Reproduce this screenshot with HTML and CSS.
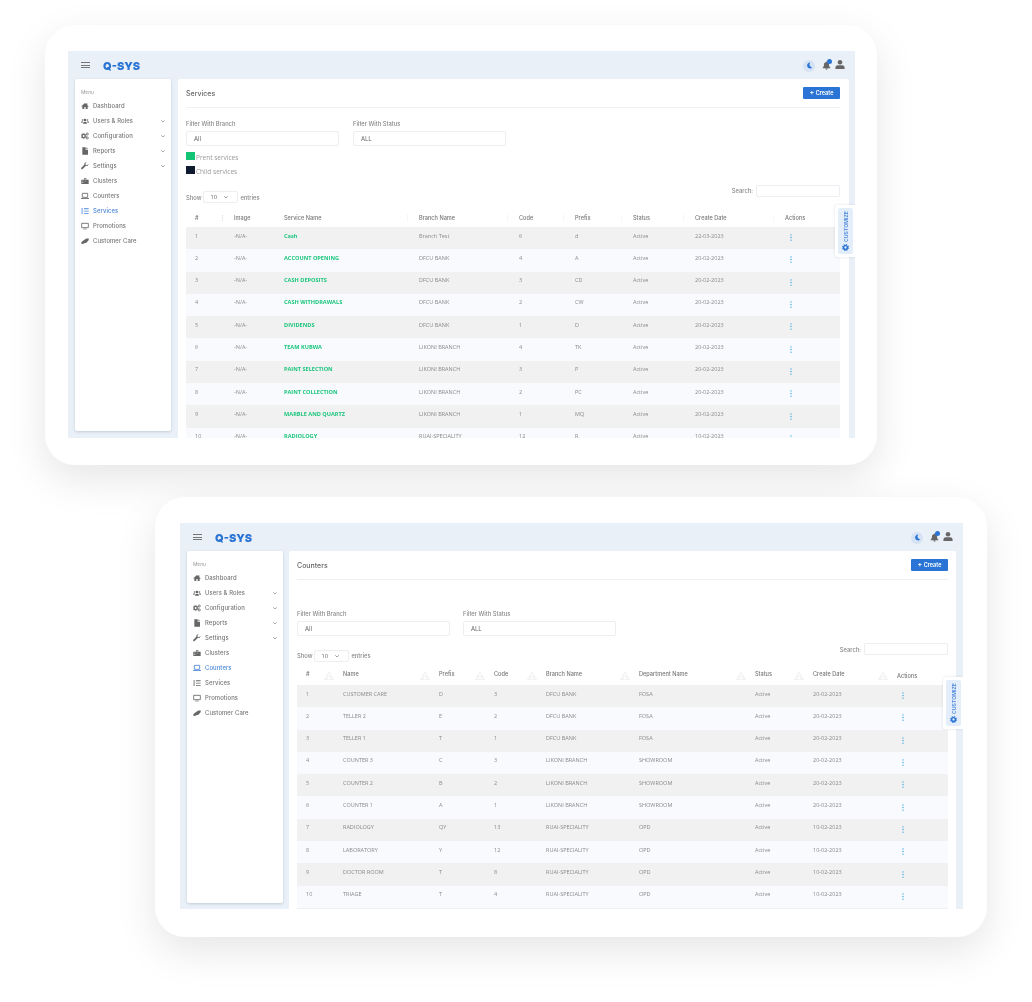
FILE: index.html
```html
<!DOCTYPE html>
<html>

<head>
    <title>Q-SYS Screens</title>
    <link rel="stylesheet" href="styles.css">
</head>

<body>
    <svg class="icon-defs" xmlns="http://www.w3.org/2000/svg">
        <symbol id="i-home" viewBox="0 0 24 24"><path d="M12 3 1 13l1.500 1.500L4 13v8h6v-6h4v6h6v-8l1.500 1.500L23 13l-4-3.600V4h-3v2.700z" /></symbol>
        <symbol id="i-users" viewBox="0 0 24 24"><circle cx="12" cy="9" r="4" /><circle cx="4.500" cy="9" r="2.500" /><circle cx="19.500" cy="9" r="2.500" /><path d="M6 20c0-4 2-6 6-6s6 2 6 6zM0 17c0-3 1.500-4.500 4.500-4.500L6 13c-1 1-1.500 2.500-1.500 4zM24 17c0-3-1.500-4.500-4.500-4.500L18 13c1 1 1.500 2.500 1.500 4z" /></symbol>
        <symbol id="i-cogs" viewBox="0 0 24 24"><circle cx="8" cy="12" r="5" fill="none" stroke="currentColor" stroke-width="4" /><circle cx="8" cy="12" r="8" fill="none" stroke="currentColor" stroke-width="2.500" stroke-dasharray="3 3" /><circle cx="19" cy="6" r="3" fill="none" stroke="currentColor" stroke-width="2.500" /><circle cx="19" cy="18" r="3" fill="none" stroke="currentColor" stroke-width="2.500" /></symbol>
        <symbol id="i-file" viewBox="0 0 24 24"><path d="M4 1h10v7h7v15H4zM16 1l5 5h-5z" /></symbol>
        <symbol id="i-wrench" viewBox="0 0 24 24"><path d="M22 6l-4 4-4-1-1-4 4-4c-4-1-8 2-7 7L1 17c-1 1-1 2.500 0 4s3 1 4 0l9-9c5 1 9-2 8-6z" /></symbol>
        <symbol id="i-clusters" viewBox="0 0 24 24"><path d="M1 8h8V4h7v4h7v13H1z" /><path d="M4 11h3v2H4zM4 15h3v2H4zM11 7h3v2h-3zM11 11h3v2h-3z" fill="#fff" /></symbol>
        <symbol id="i-laptop" viewBox="0 0 24 24"><path d="M4 4h16v12H4z" fill="none" stroke="currentColor" stroke-width="2.500" /><path d="M0 18h24v2.500H0z" /></symbol>
        <symbol id="i-list" viewBox="0 0 24 24"><path d="M9 4h14v2.500H9zM9 11h14v2.500H9zM9 18h14v2.500H9zM2 3h2.500v18H2z" /></symbol>
        <symbol id="i-monitor" viewBox="0 0 24 24"><path d="M2 4h20v13H2z" fill="none" stroke="currentColor" stroke-width="2.500" /><path d="M7 20h10v2H7z" /></symbol>
        <symbol id="i-hands" viewBox="0 0 24 24"><path d="M1 16 10 8l5-3 8-1v6l-7 7-7 2-3 2-5-1z" /></symbol>
        <symbol id="i-moon" viewBox="0 0 24 24"><path d="M15 2a10 10 0 1 0 6 17A10 10 0 0 1 15 2z" /></symbol>
        <symbol id="i-bell" viewBox="0 0 24 24"><path d="M12 1a2 2 0 0 1 2 2c4 1 5 4 5 8 0 3 1 4 3 6v2H2v-2c2-2 3-3 3-6 0-4 1-7 5-8a2 2 0 0 1 2-2zM9 20h6a3 3 0 0 1-6 0z" /></symbol>
        <symbol id="i-user" viewBox="0 0 24 24"><circle cx="12" cy="6.500" r="5.500" /><path d="M1 23v-3c0-4 3-6 6-6h10c3 0 6 2 6 6v3z" /></symbol>
        <symbol id="i-gear" viewBox="0 0 24 24"><circle cx="12" cy="12" r="6.500" fill="none" stroke="currentColor" stroke-width="5" /><circle cx="12" cy="12" r="10" fill="none" stroke="currentColor" stroke-width="3.500" stroke-dasharray="4.500 3.350" /></symbol>
        <symbol id="i-sort" viewBox="0 0 24 24"><path d="M12 3 6 14h12zM5 15 0 23h10zM19 15l-5 8h10z" fill="none" stroke="currentColor" stroke-width="1.800" /></symbol>
        <symbol id="i-down" viewBox="0 0 24 24"><path d="M5 9l7 7 7-7" fill="none" stroke="currentColor" stroke-width="2.500" /></symbol>
        <symbol id="i-dots" viewBox="0 0 4 16"><circle cx="2" cy="2" r="1.500" /><circle cx="2" cy="8" r="1.500" /><circle cx="2" cy="14" r="1.500" /></symbol>
    </svg>

    <div class="card card--services">
        <div class="frame frame--services">
            <div class="topbar">
                <div class="burger"><span></span><span></span><span></span></div>
                <div class="logo">Q-SYS</div>
                <div class="topbar-icons">
                    <div class="moon"><svg><use href="#i-moon" /></svg></div>
                    <div class="bell"><svg><use href="#i-bell" /></svg><span class="bell-dot"></span></div>
                    <svg class="user"><use href="#i-user" /></svg>
                </div>
            </div>
            <div class="frame-body">
                <div class="sidebar">
                    <div class="menu-label">Menu</div>
                    <div class="menu-item"><svg class="menu-icon"><use href="#i-home" /></svg>Dashboard</div>
                    <div class="menu-item"><svg class="menu-icon"><use href="#i-users" /></svg>Users &amp; Roles<svg class="chevron"><use href="#i-down" /></svg></div>
                    <div class="menu-item"><svg class="menu-icon"><use href="#i-cogs" /></svg>Configuration<svg class="chevron"><use href="#i-down" /></svg></div>
                    <div class="menu-item"><svg class="menu-icon"><use href="#i-file" /></svg>Reports<svg class="chevron"><use href="#i-down" /></svg></div>
                    <div class="menu-item"><svg class="menu-icon"><use href="#i-wrench" /></svg>Settings<svg class="chevron"><use href="#i-down" /></svg></div>
                    <div class="menu-item"><svg class="menu-icon"><use href="#i-clusters" /></svg>Clusters</div>
                    <div class="menu-item"><svg class="menu-icon"><use href="#i-laptop" /></svg>Counters</div>
                    <div class="menu-item menu-item--active"><svg class="menu-icon"><use href="#i-list" /></svg>Services</div>
                    <div class="menu-item"><svg class="menu-icon"><use href="#i-monitor" /></svg>Promotions</div>
                    <div class="menu-item"><svg class="menu-icon"><use href="#i-hands" /></svg>Customer Care</div>
                </div>
                <div class="main">
                    <div class="page-head">
                        <div class="page-title">Services</div>
                        <div class="btn-create"><span class="plus">+</span> Create</div>
                    </div>
                    <div class="filters">
                        <div class="filter">
                            <div class="filter-label">Filter With Branch</div>
                            <div class="filter-input">All</div>
                        </div>
                        <div class="filter">
                            <div class="filter-label">Filter With Status</div>
                            <div class="filter-input">ALL</div>
                        </div>
                    </div>
                    <div class="legend">
                        <div class="legend-row"><span class="swatch swatch--green"></span>Prent services</div>
                        <div class="legend-row"><span class="swatch swatch--dark"></span>Child services</div>
                    </div>
                    <div class="controls">
                        <div class="show">Show <div class="select">10<svg class="select-arrow"><use href="#i-down" /></svg></div> entries</div>
                        <div class="search">Search: <div class="search-input"></div></div>
                    </div>
                    <table class="grid grid--services">
                        <tr>
                            <th>#<svg class="sort-dots sort-dots--on"><use href="#i-dots" /></svg></th>
                            <th>Image</th>
                            <th>Service Name<svg class="sort-dots"><use href="#i-dots" /></svg></th>
                            <th>Branch Name<svg class="sort-dots"><use href="#i-dots" /></svg></th>
                            <th>Code<svg class="sort-dots"><use href="#i-dots" /></svg></th>
                            <th>Prefix<svg class="sort-dots"><use href="#i-dots" /></svg></th>
                            <th>Status<svg class="sort-dots"><use href="#i-dots" /></svg></th>
                            <th>Create Date<svg class="sort-dots"><use href="#i-dots" /></svg></th>
                            <th>Actions</th>
                        </tr>
                        <tr><td>1</td><td>-N/A-</td><td class="name">Cash</td><td>Branch Test</td><td>6</td><td>d</td><td>Active</td><td>22-03-2023</td><td><svg class="dots"><use href="#i-dots" /></svg></td></tr>
                        <tr><td>2</td><td>-N/A-</td><td class="name">ACCOUNT OPENING</td><td>DFCU BANK</td><td>4</td><td>A</td><td>Active</td><td>20-02-2023</td><td><svg class="dots"><use href="#i-dots" /></svg></td></tr>
                        <tr><td>3</td><td>-N/A-</td><td class="name">CASH DEPOSITS</td><td>DFCU BANK</td><td>3</td><td>CD</td><td>Active</td><td>20-02-2023</td><td><svg class="dots"><use href="#i-dots" /></svg></td></tr>
                        <tr><td>4</td><td>-N/A-</td><td class="name">CASH WITHDRAWALS</td><td>DFCU BANK</td><td>2</td><td>CW</td><td>Active</td><td>20-02-2023</td><td><svg class="dots"><use href="#i-dots" /></svg></td></tr>
                        <tr><td>5</td><td>-N/A-</td><td class="name">DIVIDENDS</td><td>DFCU BANK</td><td>1</td><td>D</td><td>Active</td><td>20-02-2023</td><td><svg class="dots"><use href="#i-dots" /></svg></td></tr>
                        <tr><td>6</td><td>-N/A-</td><td class="name">TEAM KUBWA</td><td>LIKONI BRANCH</td><td>4</td><td>TK</td><td>Active</td><td>20-02-2023</td><td><svg class="dots"><use href="#i-dots" /></svg></td></tr>
                        <tr><td>7</td><td>-N/A-</td><td class="name">PAINT SELECTION</td><td>LIKONI BRANCH</td><td>3</td><td>P</td><td>Active</td><td>20-02-2023</td><td><svg class="dots"><use href="#i-dots" /></svg></td></tr>
                        <tr><td>8</td><td>-N/A-</td><td class="name">PAINT COLLECTION</td><td>LIKONI BRANCH</td><td>2</td><td>PC</td><td>Active</td><td>20-02-2023</td><td><svg class="dots"><use href="#i-dots" /></svg></td></tr>
                        <tr><td>9</td><td>-N/A-</td><td class="name">MARBLE AND QUARTZ</td><td>LIKONI BRANCH</td><td>1</td><td>MQ</td><td>Active</td><td>20-02-2023</td><td><svg class="dots"><use href="#i-dots" /></svg></td></tr>
                        <tr><td>10</td><td>-N/A-</td><td class="name">RADIOLOGY</td><td>RUAI-SPECIALITY</td><td>12</td><td>R</td><td>Active</td><td>10-02-2023</td><td><svg class="dots"><use href="#i-dots" /></svg></td></tr>
                    </table>
                </div>
            </div>
            <div class="customize customize--services">
                <div class="customize-inner"><span class="customize-text">CUSTOMIZE</span><svg class="gear"><use href="#i-gear" /></svg></div>
            </div>
        </div>
    </div>

    <div class="card card--counters">
        <div class="frame frame--counters">
            <div class="topbar">
                <div class="burger"><span></span><span></span><span></span></div>
                <div class="logo">Q-SYS</div>
                <div class="topbar-icons">
                    <div class="moon"><svg><use href="#i-moon" /></svg></div>
                    <div class="bell"><svg><use href="#i-bell" /></svg><span class="bell-dot"></span></div>
                    <svg class="user"><use href="#i-user" /></svg>
                </div>
            </div>
            <div class="frame-body">
                <div class="sidebar">
                    <div class="menu-label">Menu</div>
                    <div class="menu-item"><svg class="menu-icon"><use href="#i-home" /></svg>Dashboard</div>
                    <div class="menu-item"><svg class="menu-icon"><use href="#i-users" /></svg>Users &amp; Roles<svg class="chevron"><use href="#i-down" /></svg></div>
                    <div class="menu-item"><svg class="menu-icon"><use href="#i-cogs" /></svg>Configuration<svg class="chevron"><use href="#i-down" /></svg></div>
                    <div class="menu-item"><svg class="menu-icon"><use href="#i-file" /></svg>Reports<svg class="chevron"><use href="#i-down" /></svg></div>
                    <div class="menu-item"><svg class="menu-icon"><use href="#i-wrench" /></svg>Settings<svg class="chevron"><use href="#i-down" /></svg></div>
                    <div class="menu-item"><svg class="menu-icon"><use href="#i-clusters" /></svg>Clusters</div>
                    <div class="menu-item menu-item--active"><svg class="menu-icon"><use href="#i-laptop" /></svg>Counters</div>
                    <div class="menu-item"><svg class="menu-icon"><use href="#i-list" /></svg>Services</div>
                    <div class="menu-item"><svg class="menu-icon"><use href="#i-monitor" /></svg>Promotions</div>
                    <div class="menu-item"><svg class="menu-icon"><use href="#i-hands" /></svg>Customer Care</div>
                </div>
                <div class="main">
                    <div class="page-head">
                        <div class="page-title">Counters</div>
                        <div class="btn-create"><span class="plus">+</span> Create</div>
                    </div>
                    <div class="filters">
                        <div class="filter">
                            <div class="filter-label">Filter With Branch</div>
                            <div class="filter-input">All</div>
                        </div>
                        <div class="filter">
                            <div class="filter-label">Filter With Status</div>
                            <div class="filter-input">ALL</div>
                        </div>
                    </div>
                    <div class="controls">
                        <div class="show">Show <div class="select">10<svg class="select-arrow"><use href="#i-down" /></svg></div> entries</div>
                        <div class="search">Search: <div class="search-input"></div></div>
                    </div>
                    <table class="grid grid--counters">
                        <tr>
                            <th>#<svg class="sort"><use href="#i-sort" /></svg></th>
                            <th>Name<svg class="sort"><use href="#i-sort" /></svg></th>
                            <th>Prefix<svg class="sort"><use href="#i-sort" /></svg></th>
                            <th>Code<svg class="sort"><use href="#i-sort" /></svg></th>
                            <th>Branch Name<svg class="sort"><use href="#i-sort" /></svg></th>
                            <th>Department Name<svg class="sort"><use href="#i-sort" /></svg></th>
                            <th>Status<svg class="sort"><use href="#i-sort" /></svg></th>
                            <th>Create Date<svg class="sort"><use href="#i-sort" /></svg></th>
                            <th>Actions</th>
                        </tr>
                        <tr><td>1</td><td>CUSTOMER CARE</td><td>D</td><td>3</td><td>DFCU BANK</td><td>FOSA</td><td>Active</td><td>20-02-2023</td><td><svg class="dots"><use href="#i-dots" /></svg></td></tr>
                        <tr><td>2</td><td>TELLER 2</td><td>E</td><td>2</td><td>DFCU BANK</td><td>FOSA</td><td>Active</td><td>20-02-2023</td><td><svg class="dots"><use href="#i-dots" /></svg></td></tr>
                        <tr><td>3</td><td>TELLER 1</td><td>T</td><td>1</td><td>DFCU BANK</td><td>FOSA</td><td>Active</td><td>20-02-2023</td><td><svg class="dots"><use href="#i-dots" /></svg></td></tr>
                        <tr><td>4</td><td>COUNTER 3</td><td>C</td><td>3</td><td>LIKONI BRANCH</td><td>SHOWROOM</td><td>Active</td><td>20-02-2023</td><td><svg class="dots"><use href="#i-dots" /></svg></td></tr>
                        <tr><td>5</td><td>COUNTER 2</td><td>B</td><td>2</td><td>LIKONI BRANCH</td><td>SHOWROOM</td><td>Active</td><td>20-02-2023</td><td><svg class="dots"><use href="#i-dots" /></svg></td></tr>
                        <tr><td>6</td><td>COUNTER 1</td><td>A</td><td>1</td><td>LIKONI BRANCH</td><td>SHOWROOM</td><td>Active</td><td>20-02-2023</td><td><svg class="dots"><use href="#i-dots" /></svg></td></tr>
                        <tr><td>7</td><td>RADIOLOGY</td><td>QY</td><td>13</td><td>RUAI-SPECIALITY</td><td>OPD</td><td>Active</td><td>10-02-2023</td><td><svg class="dots"><use href="#i-dots" /></svg></td></tr>
                        <tr><td>8</td><td>LABORATORY</td><td>Y</td><td>12</td><td>RUAI-SPECIALITY</td><td>OPD</td><td>Active</td><td>10-02-2023</td><td><svg class="dots"><use href="#i-dots" /></svg></td></tr>
                        <tr><td>9</td><td>DOCTOR ROOM</td><td>T</td><td>8</td><td>RUAI-SPECIALITY</td><td>OPD</td><td>Active</td><td>10-02-2023</td><td><svg class="dots"><use href="#i-dots" /></svg></td></tr>
                        <tr><td>10</td><td>TRIAGE</td><td>T</td><td>4</td><td>RUAI-SPECIALITY</td><td>OPD</td><td>Active</td><td>10-02-2023</td><td><svg class="dots"><use href="#i-dots" /></svg></td></tr>
                    </table>
                </div>
            </div>
            <div class="customize customize--counters">
                <div class="customize-inner"><span class="customize-text">CUSTOMIZE</span><svg class="gear"><use href="#i-gear" /></svg></div>
            </div>
        </div>
    </div>
</body>

</html>
```

FILE: styles.css
```css
body {
    margin: 0;
    height: 1002px;
    overflow: hidden;
    background-color: white;
    font-family: "Inter", "Liberation Sans", sans-serif;
    color: #6f6f6f;
}

.icon-defs {
    display: none;
}

.card {
    width: 832px;
    height: 440px;
    box-sizing: border-box;
    background-color: white;
    border-radius: 30px;
    box-shadow: 0 14px 40px rgba(0, 0, 0, 0.1);
}

.card--services {
    margin: 25px 0 0 45px;
    padding: 26px 0 0 23px;
}

.card--counters {
    margin: 32px 0 0 155px;
    padding: 26px 0 0 25px;
}

.frame {
    position: relative;
    display: flex;
    flex-direction: column;
    overflow: hidden;
    background-color: #eaf0f7;
    filter: blur(0.3px);
}

.frame--services {
    width: 787px;
    height: 387px;
}

.frame--counters {
    width: 783px;
    height: 386px;
}

/* top bar */
.topbar {
    flex: none;
    display: flex;
    align-items: center;
    height: 28px;
    padding: 0 10px 0 13px;
}

.burger {
    width: 9px;
    margin-right: 13px;
}

.burger span {
    display: block;
    height: 1px;
    margin: 1.500px 0;
    background-color: #777;
}

.logo {
    color: #2a74d5;
    font-size: 11px;
    font-weight: 900;
    margin-top: 2px;
}

.topbar-icons {
    display: flex;
    align-items: center;
    margin-left: auto;
}

.moon {
    display: flex;
    align-items: center;
    justify-content: center;
    width: 12px;
    height: 12px;
    margin-top: 1px;
    margin-right: 7px;
    border-radius: 50%;
    background-color: #d6e3f4;
    color: #2a74d5;
}

.moon svg {
    width: 7px;
    height: 7px;
    fill: currentColor;
}

.bell {
    position: relative;
    width: 9px;
    height: 9px;
    margin-right: 4px;
}

.bell svg {
    display: block;
    width: 9px;
    height: 9px;
    fill: #666;
}

.bell-dot {
    position: absolute;
    top: -2px;
    right: -1px;
    width: 5.500px;
    height: 5.500px;
    border-radius: 50%;
    background-color: #2a74d5;
}

.user {
    width: 10px;
    height: 11px;
    margin-top: -2px;
    fill: #666;
}

/* sidebar */
.frame-body {
    display: flex;
    align-items: flex-start;
    flex: 1;
    min-height: 0;
}

.sidebar {
    flex: none;
    box-sizing: border-box;
    width: 96px;
    height: 352px;
    margin-left: 7px;
    padding: 9px 6px 0;
    background-color: white;
    border-radius: 2px;
    box-shadow: 0 1px 3px rgba(40, 60, 90, 0.2);
}

.menu-label {
    height: 8px;
    line-height: 8px;
    font-size: 4.800px;
    color: #999;
    margin-bottom: 2px;
}

.menu-item {
    display: flex;
    align-items: center;
    height: 15px;
    font-size: 5.900px;
    font-weight: 500;
    letter-spacing: 0.1px;
    color: #777;
}

.menu-item--active {
    color: #4a86d8;
}

.menu-icon {
    flex: none;
    width: 8px;
    height: 8px;
    margin-right: 4px;
    fill: currentColor;
    color: #666;
}

.menu-item--active .menu-icon {
    color: #4a86d8;
}

.chevron {
    width: 6px;
    height: 6px;
    margin-left: auto;
    margin-right: -1px;
    color: #777;
}

/* main panel */
.main {
    flex: none;
    box-sizing: border-box;
    height: 100%;
    padding: 0 9px 0 8px;
    overflow: hidden;
    background-color: white;
    border-radius: 2px 2px 0 0;
}

.frame--services .main {
    width: 671px;
    margin-left: 7px;
}

.frame--counters .main {
    width: 667px;
    margin-left: 6px;
    padding-right: 8px;
}

.page-head {
    display: flex;
    align-items: center;
    justify-content: space-between;
    height: 28px;
    border-bottom: 1px solid #f0f0f0;
}

.page-title {
    font-size: 7px;
    font-weight: 500;
    color: #666;
}

.btn-create {
    width: 37px;
    height: 12px;
    line-height: 11px;
    margin-top: -1px;
    text-align: center;
    font-size: 5.500px;
    font-weight: 600;
    color: white;
    background-color: #2a74d5;
    border-radius: 1px;
}

.plus {
    font-size: 7px;
}

.filters {
    display: flex;
    margin-top: 12px;
}

.frame--counters .filters {
    margin-top: 30px;
}

.filter {
    width: 153px;
    margin-right: 14px;
}

.frame--counters .filter {
    margin-right: 13px;
}

.filter-label {
    height: 8px;
    line-height: 8px;
    margin-bottom: 3px;
    font-size: 5.800px;
    font-weight: 500;
    color: #888;
}

.filter-input {
    box-sizing: border-box;
    height: 15px;
    line-height: 13px;
    padding-left: 7px;
    font-family: "Open Sans", sans-serif;
    font-size: 6.300px;
    color: #666;
    border: 1px solid #eceef1;
    border-radius: 2px;
}

.legend {
    margin-top: 6px;
    font-family: "Open Sans", sans-serif;
    font-size: 6.500px;
    color: #999;
}

.legend-row {
    display: flex;
    align-items: flex-start;
    height: 14px;
    line-height: 11px;
}

.swatch {
    width: 9px;
    height: 8px;
    margin-right: 1px;
}

.swatch--green {
    background-color: #12c473;
}

.swatch--dark {
    background-color: #101a2e;
}

.controls {
    display: flex;
    align-items: flex-start;
    justify-content: space-between;
    height: 19px;
    margin-top: 4.500px;
    font-size: 5.800px;
    font-weight: 500;
    color: #888;
}

.frame--counters .controls {
    margin-top: 7px;
}

.show {
    display: flex;
    align-items: center;
    margin-top: 6.500px;
}

.select {
    display: flex;
    align-items: center;
    justify-content: space-between;
    box-sizing: border-box;
    width: 35px;
    height: 12px;
    margin: 0 2px 0 2px;
    padding: 0 8px 0 6px;
    font-family: "Open Sans", sans-serif;
    color: #666;
    border: 1px solid #eceef1;
    border-radius: 2px;
}

.select-arrow {
    width: 6px;
    height: 6px;
    color: #666;
}

.search {
    display: flex;
    align-items: center;
}

.search-input {
    box-sizing: border-box;
    width: 84px;
    height: 12px;
    margin-left: 3px;
    border: 1px solid #eceef1;
    border-radius: 2px;
}

/* tables */
.grid {
    width: 100%;
    margin-top: 4.500px;
    table-layout: fixed;
    border-collapse: collapse;
}

.grid--counters {
    margin-top: 4px;
}

.grid th {
    height: 19px;
    padding: 0 9px;
    text-align: left;
    font-size: 5.600px;
    font-weight: 500;
    color: #777;
    white-space: nowrap;
}

.grid td {
    height: 16.800px;
    padding: 5.500px 9px 0;
    vertical-align: top;
    line-height: 7px;
    font-family: "Open Sans", sans-serif;
    font-size: 5.500px;
    color: #8a8a8a;
    white-space: nowrap;
}

.grid tr:nth-child(even) {
    background-color: #f1f1f1;
}

.grid tr:nth-child(odd) {
    background-color: #f8fafd;
}

.grid tr:first-child {
    background-color: white;
}

.grid td.name {
    font-size: 5.600px;
    font-weight: 700;
    color: #1cc67d;
}

.grid--services th:nth-child(1) { width: 21px; }
.grid--services th:nth-child(2) { width: 32px; }
.grid--services th:nth-child(3) { width: 117px; }
.grid--services th:nth-child(4) { width: 82px; }
.grid--services th:nth-child(5) { width: 38px; }
.grid--services th:nth-child(6) { width: 40px; }
.grid--services th:nth-child(7) { width: 44px; }
.grid--services th:nth-child(8) { width: 72px; }

.grid--counters th:nth-child(1) { width: 19px; }
.grid--counters th:nth-child(2) { width: 78px; }
.grid--counters th:nth-child(3) { width: 37px; }
.grid--counters th:nth-child(4) { width: 34px; }
.grid--counters th:nth-child(5) { width: 75px; }
.grid--counters th:nth-child(6) { width: 98px; }
.grid--counters th:nth-child(7) { width: 40px; }
.grid--counters th:nth-child(8) { width: 66px; }

.grid--counters tr:last-child {
    border-bottom: 1px solid #f0f0f0;
}

.sort {
    float: right;
    width: 10px;
    height: 9px;
    margin-right: -9px;
    color: #e8e8e8;
}

.sort-dots {
    float: right;
    width: 1.500px;
    height: 6px;
    margin-right: -7px;
    fill: #e4e4e4;
}

.sort-dots--on {
    fill: #bbb;
}

.dots {
    display: block;
    width: 2px;
    height: 7px;
    margin: 1.700px 0 0 5px;
    fill: #2fa3e0;
}

/* floating customize tab */
.customize {
    position: absolute;
    right: 0;
    top: 154px;
    box-sizing: border-box;
    width: 20px;
    height: 52px;
    padding: 3px 2px 3px 3px;
    background-color: white;
    border-radius: 3px 0 0 3px;
    box-shadow: 0 0 3px rgba(40, 60, 90, 0.15);
}

.customize-inner {
    display: flex;
    flex-direction: column;
    align-items: center;
    height: 100%;
    background-color: #e4eefa;
    border-radius: 2px;
}

.customize-text {
    writing-mode: vertical-rl;
    transform: rotate(180deg);
    margin-top: 3px;
    font-size: 5.200px;
    font-weight: 600;
    color: #4a86d8;
}

.gear {
    width: 7px;
    height: 7px;
    margin-top: auto;
    margin-bottom: 3px;
    color: #2a74d5;
}
```
